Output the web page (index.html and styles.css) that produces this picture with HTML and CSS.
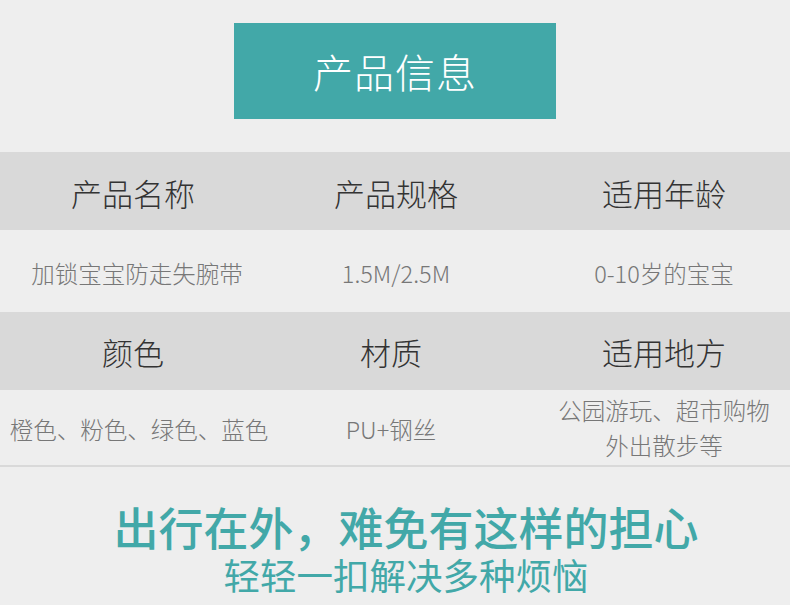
FILE: index.html
```html
<!DOCTYPE html>
<html lang="zh-CN">
<head>
    <meta charset="UTF-8">
    <meta name="viewport" content="width=device-width, initial-scale=1.0">
    <title>产品信息</title>
    <link rel="stylesheet" href="styles.css">
</head>
<body>
    <div class="title-wrap">
        <h1 class="title">产品信息</h1>
    </div>

    <div class="info-table">
        <div class="row head">
            <div class="cell">产品名称</div>
            <div class="cell">产品规格</div>
            <div class="cell">适用年龄</div>
        </div>
        <div class="row data">
            <div class="cell">加锁宝宝防走失腕带</div>
            <div class="cell">1.5M/2.5M</div>
            <div class="cell">0-10岁的宝宝</div>
        </div>
        <div class="row head second">
            <div class="cell">颜色</div>
            <div class="cell">材质</div>
            <div class="cell">适用地方</div>
        </div>
        <div class="row data last">
            <div class="cell">橙色、粉色、绿色、蓝色</div>
            <div class="cell">PU+钢丝</div>
            <div class="cell two-line">公园游玩、超市购物<br>外出散步等</div>
        </div>
    </div>

    <div class="slogan">
        <p class="slogan-main">出行在外，难免有这样的担心</p>
        <p class="slogan-sub">轻轻一扣解决多种烦恼</p>
    </div>
</body>
</html>
```

FILE: styles.css
```css
body {
    margin: 0;
    background: #eeeeee;
    font-family: "Noto Sans CJK SC", "Noto Sans", sans-serif;
    width: 790px;
    height: 605px;
    overflow: hidden;
}
.title-wrap { padding-top: 23px; display: flex; justify-content: center; }
.title {
    margin: 0;
    width: 322px;
    height: 96px;
    background: #42a8a8;
    color: #fff;
    font-size: 40px;
    font-weight: 300;
    display: flex;
    align-items: center;
    justify-content: center;
    letter-spacing: 1px;
}

.info-table { margin-top: 33px; }
.row {
    display: grid;
    grid-template-columns: 266px 260px 264px;
}
.row .cell {
    display: flex;
    align-items: center;
    justify-content: center;
    text-align: center;
    white-space: nowrap;
}
.row .cell:nth-child(3) { padding-left: 12px; }
.head { background: #d9d9d9; height: 78px; }
.head .cell { font-size: 31px; font-weight: 300; color: #333; padding-top: 2px; }
.head.second .cell { padding-top: 0; }
.head.second .cell:nth-child(2) { padding-right: 10px; }
.data { height: 82px; }
.data .cell { font-size: 23.5px; font-weight: 300; color: #777; padding-top: 4px; }
.data .cell:nth-child(1) { padding-left: 8px; }
.data.last { height: 75px; border-bottom: 2px solid #d9d9d9; }
.data.last .cell { padding-top: 2px; }
.data.last .cell:nth-child(1) { padding-left: 12px; }
.data.last .cell:nth-child(2) { padding-right: 10px; }
.data.last .two-line { line-height: 35px; padding-top: 0; white-space: normal; }

.slogan { text-align: center; padding: 32px 0 0 22px; }
.slogan p { margin: 0; }
.slogan-main { font-size: 45px; font-weight: 500; color: #42a8a8; line-height: 56px; }
.slogan-sub { font-size: 36.5px; color: #42a8a8; line-height: 40px; }
```
